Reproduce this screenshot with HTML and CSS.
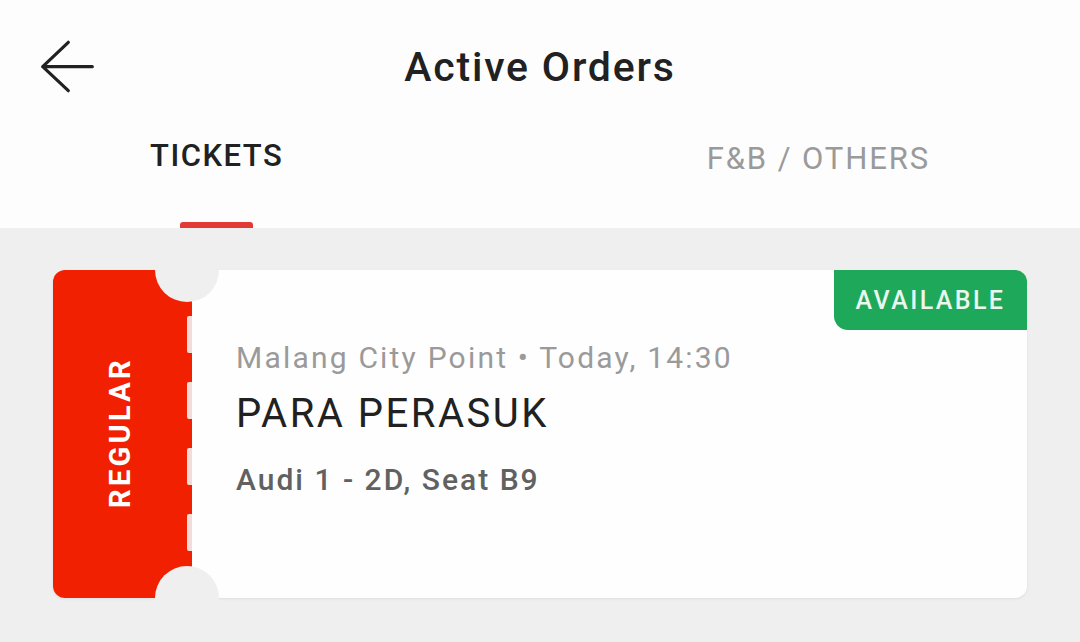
FILE: index.html
```html
<!DOCTYPE html>
<html>
<head>
<meta charset="utf-8">
<link rel="stylesheet" href="styles.css">
</head>
<body>
<header class="header">
  <div class="appbar">
    <div class="back">
      <svg class="back-icon" width="54" height="54" viewBox="0 0 54 54">
        <path d="M28.3 2.3 L2.7 26.7 L28.3 50.7 M2.7 26.7 H52.3" fill="none" stroke="#212121" stroke-width="3.2" stroke-linecap="round" stroke-linejoin="round"/>
      </svg>
    </div>
    <h1 class="title">Active Orders</h1>
    <div></div>
  </div>
  <nav class="tabs">
    <div class="tab tab-active">
      <span class="tab-label">TICKETS</span>
      <span class="indicator"></span>
    </div>
    <div class="tab">
      <span class="tab-label tab-label-muted">F&amp;B / OTHERS</span>
    </div>
  </nav>
</header>
<main class="content">
  <article class="ticket">
    <div class="stub">
      <div class="stub-label">REGULAR</div>
      <div class="perf">
        <span class="dash"></span>
        <span class="dash"></span>
        <span class="dash"></span>
        <span class="dash"></span>
      </div>
    </div>
    <div class="details">
      <div class="meta">Malang City Point • Today, 14:30</div>
      <div class="movie">PARA PERASUK</div>
      <div class="seat">Audi 1 - 2D, Seat B9</div>
    </div>
    <div class="badge">AVAILABLE</div>
  </article>
</main>
</body>
</html>
```
FILE: styles.css
```css
* { box-sizing: border-box; }
html, body {
  margin: 0;
  padding: 0;
}
body {
  width: 1080px;
  height: 642px;
  overflow: hidden;
  background: #efefef;
  font-family: Roboto, "Liberation Sans", sans-serif;
}
.header {
  background: #fdfdfd;
  height: 228px;
}
.appbar {
  height: 134px;
  display: grid;
  grid-template-columns: 1fr auto 1fr;
  align-items: center;
}
.back {
  padding-left: 40px;
  display: flex;
  align-items: center;
}
.back-icon { display: block; }
.title {
  margin: 0;
  font-size: 41px;
  font-weight: 500;
  color: #212121;
  letter-spacing: 1.8px;
  line-height: 48px;
}
.tabs {
  height: 94px;
  display: flex;
  justify-content: space-between;
  padding: 0 150px;
}
.tab {
  display: flex;
  flex-direction: column;
  align-items: center;
}
.tab-label {
  font-size: 31px;
  font-weight: 500;
  letter-spacing: 1.5px;
  color: #212121;
  line-height: 36px;
  margin-top: 4px;
}
.tab-label-muted {
  color: #9a9a9a;
  font-weight: 400;
  letter-spacing: 1.9px;
  margin-top: 7px;
}
.indicator {
  margin-top: auto;
  width: 73px;
  height: 6px;
  border-radius: 3px 3px 0 0;
  background: #e23b36;
}
.content {
  padding: 42px 53px 0;
}
.ticket {
  position: relative;
  display: flex;
  height: 328px;
  background: #fefefe;
  border-radius: 12px;
  box-shadow: 0 1px 3px rgba(0,0,0,0.07);
}
.ticket::before,
.ticket::after {
  content: "";
  position: absolute;
  left: 102px;
  width: 64px;
  height: 64px;
  border-radius: 50%;
  background: #efefef;
}
.ticket::before { top: -32px; }
.ticket::after { bottom: -32px; }
.stub {
  width: 139px;
  flex-shrink: 0;
  background: #f12000;
  border-radius: 12px 0 0 12px;
  display: flex;
}
.stub-label {
  flex: 1;
  display: flex;
  align-items: center;
  justify-content: center;
  writing-mode: vertical-rl;
  transform: rotate(180deg);
  color: #ffffff;
  font-size: 29px;
  font-weight: 700;
  letter-spacing: 3.3px;
  padding-top: 3px;
}
.perf {
  width: 5px;
  display: flex;
  flex-direction: column;
  justify-content: center;
  gap: 29px;
  padding-bottom: 2px;
}
.dash {
  display: block;
  width: 5px;
  height: 37px;
  background: #f2dcd9;
  border-radius: 2px 0 0 2px;
}
.details {
  flex: 1;
  padding: 70px 0 0 44px;
}
.meta {
  font-size: 30px;
  line-height: 36px;
  color: #9a9a9a;
  letter-spacing: 2.2px;
}
.movie {
  margin-top: 14px;
  font-size: 40px;
  line-height: 48px;
  color: #212121;
  letter-spacing: 2.5px;
}
.seat {
  margin-top: 24px;
  font-size: 30px;
  line-height: 36px;
  font-weight: 500;
  color: #616161;
  letter-spacing: 2px;
}
.badge {
  position: absolute;
  top: 0;
  right: 0;
  width: 193px;
  height: 60px;
  display: flex;
  align-items: center;
  justify-content: center;
  background: #1ea85a;
  color: #e9f7ee;
  font-size: 25px;
  font-weight: 500;
  letter-spacing: 2.4px;
  border-radius: 0 12px 0 14px;
}
```
